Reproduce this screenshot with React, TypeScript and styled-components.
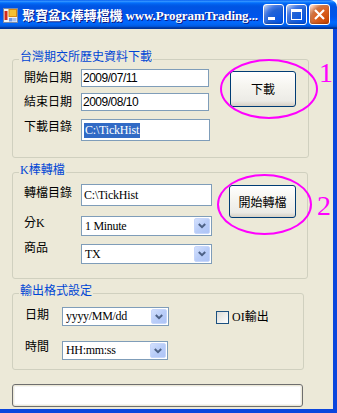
import React from 'react';
import styled, { createGlobalStyle } from 'styled-components';

const Global = createGlobalStyle`
  html, body { margin: 0; padding: 0; background: #ffffff; }
  body { width: 337px; height: 413px; overflow: hidden; }
`;

const SERIF_CJK = `"Liberation Serif", "Noto Sans CJK TC", serif`;
const CJK = `"Noto Sans CJK TC", "Noto Sans CJK SC", sans-serif`;

const Window = styled.div`
  width: 337px;
  height: 413px;
  display: flex;
  flex-direction: column;
  font-family: ${SERIF_CJK};
  font-size: 12px;
  color: #000;
`;

const TitleBar = styled.div`
  flex: none;
  height: 29px;
  box-sizing: border-box;
  display: flex;
  align-items: center;
  padding: 0 7px 0 3px;
  border-top-right-radius: 7px;
  background: linear-gradient(
    #0058ee 0%, #3593ff 4%, #288eff 6%, #127dff 8%, #036ffc 10%, #0262ee 14%,
    #0057e5 20%, #0054e3 24%, #0055eb 56%, #005bf5 66%, #026afe 76%,
    #0062ef 86%, #0052d6 92%, #0040ab 94%, #003092 100%
  );
`;

const AppIcon = styled.svg`
  flex: none;
  width: 15px;
  height: 15px;
  margin-top: 2px;
`;

const TitleText = styled.div`
  flex: 1;
  margin-left: 4px;
  color: #fff;
  font-weight: bold;
  font-size: 13px;
  white-space: nowrap;
  overflow: hidden;
  text-shadow: 1px 1px #0a1883;
  letter-spacing: -0.1px;
`;

const CaptionButton = styled.div<{ $close?: boolean }>`
  flex: none;
  width: 21px;
  height: 21px;
  box-sizing: border-box;
  margin-left: 2px;
  border: 1px solid #fff;
  border-radius: 3px;
  display: flex;
  align-items: center;
  justify-content: center;
  background: ${(p) =>
    p.$close
      ? 'radial-gradient(circle at 90% 90%, #cc4600 0%, #dc6527 55%, #cd7546 70%, #ffccb2 90%, #ffffff 100%)'
      : 'radial-gradient(circle at 90% 90%, #0054e9 0%, #2263d5 55%, #4479e4 70%, #a3bbec 90%, #ffffff 100%)'};
  box-shadow: inset 0 -1px 2px rgba(0, 0, 0, 0.25);
`;

const Frame = styled.div`
  flex: 1;
  display: flex;
  flex-direction: column;
  align-items: flex-start;
  box-sizing: border-box;
  padding: 21px 0 0 12px;
  background: #ece9d8;
  border-right: 4px solid #0b46dd;
  border-bottom: 4px solid #0b46dd;
`;

const Group = styled.fieldset<{ $w: number; $mt?: number }>`
  width: ${(p) => p.$w}px;
  box-sizing: border-box;
  margin: ${(p) => p.$mt ?? 0}px 0 0 0;
  padding: 0;
  min-inline-size: 0;
  border: 1px solid #d0d0bf;
  border-radius: 3px;
`;

const Legend = styled.legend`
  margin-left: 6px;
  padding: 0 1px 4px;
  font-size: 12px;
  line-height: 14px;
  color: #0046d5;
`;

const GroupBody = styled.div<{ $pt: number; $pl: number; $pb: number }>`
  display: flex;
  align-items: flex-start;
  padding: ${(p) => p.$pt}px 0 ${(p) => p.$pb}px ${(p) => p.$pl}px;
`;

const Fields = styled.div`
  display: flex;
  flex-direction: column;
`;

const Row = styled.div<{ $mt?: number }>`
  display: flex;
  align-items: flex-start;
  margin-top: ${(p) => p.$mt ?? 0}px;
`;

const Label = styled.div<{ $w: number; $dy: number }>`
  width: ${(p) => p.$w}px;
  flex: none;
  margin-top: ${(p) => p.$dy}px;
  font-size: 12px;
  line-height: 14px;
  white-space: nowrap;
`;

const TextBox = styled.div<{ $w: number; $h: number; $sans?: boolean }>`
  width: ${(p) => p.$w}px;
  height: ${(p) => p.$h}px;
  box-sizing: border-box;
  border: 1px solid #7f9db9;
  background: #fff;
  display: flex;
  align-items: center;
  padding-left: ${(p) => (p.$sans ? 1 : 2)}px;
  white-space: nowrap;
  font-family: ${(p) => (p.$sans ? '"Liberation Sans", sans-serif' : '"Liberation Serif", serif')};
  font-size: 12px;
  letter-spacing: ${(p) => (p.$sans ? -0.5 : -0.2)}px;
`;

const Selected = styled.span`
  background: #316ac5;
  color: #fff;
  line-height: 15px;
  padding: 0 1px;
`;

const Combo = styled.div<{ $w: number; $h: number }>`
  width: ${(p) => p.$w}px;
  height: ${(p) => p.$h}px;
  box-sizing: border-box;
  border: 1px solid #7f9db9;
  background: #fff;
  display: flex;
  align-items: stretch;
  padding: 1px;
`;

const ComboText = styled.span`
  flex: 1;
  display: flex;
  align-items: center;
  padding-left: 2px;
  font-family: "Liberation Serif", serif;
  font-size: 12px;
  letter-spacing: -0.3px;
  white-space: nowrap;
`;

const ComboButton = styled.span`
  width: 16px;
  box-sizing: border-box;
  border: 1px solid #c6d6fb;
  border-radius: 2px;
  background: linear-gradient(135deg, #d3e0fd 0%, #b9cdf8 50%, #aec4f6 100%);
  display: flex;
  align-items: center;
  justify-content: center;
`;

const ButtonSlot = styled.div<{ $ml: number; $mt: number }>`
  position: relative;
  flex: none;
  margin-left: ${(p) => p.$ml}px;
  margin-top: ${(p) => p.$mt}px;
`;

const PushButton = styled.div<{ $w: number; $h: number }>`
  width: ${(p) => p.$w}px;
  height: ${(p) => p.$h}px;
  box-sizing: border-box;
  border: 1px solid #003c74;
  border-radius: 3px;
  background: linear-gradient(#ffffff 0%, #f6f5f0 40%, #ecebe6 85%, #d6d0c5 100%);
  display: flex;
  align-items: center;
  justify-content: center;
  font-family: ${CJK};
  font-size: 12px;
  line-height: 14px;
`;

const Ellipse = styled.div<{ $l: number; $t: number; $w: number; $h: number }>`
  position: absolute;
  left: ${(p) => p.$l}px;
  top: ${(p) => p.$t}px;
  width: ${(p) => p.$w}px;
  height: ${(p) => p.$h}px;
  box-sizing: border-box;
  border: 2px solid #ff00ff;
  border-radius: 50%;
  pointer-events: none;
`;

const Mark = styled.div<{ $l: number; $t: number }>`
  position: absolute;
  left: ${(p) => p.$l}px;
  top: ${(p) => p.$t}px;
  color: #ff00ff;
  font-family: "Liberation Serif", serif;
  font-size: 28px;
  line-height: 28px;
`;

const CheckWrap = styled.div`
  display: flex;
  align-items: center;
  margin-left: 47px;
  margin-top: 3px;
`;

const CheckBox = styled.div`
  width: 13px;
  height: 13px;
  box-sizing: border-box;
  border: 1px solid #1c5180;
  background: linear-gradient(135deg, #dcdcd7 0%, #ffffff 100%);
`;

const CheckText = styled.span`
  margin-left: 3px;
  font-size: 12px;
  line-height: 14px;
`;

const Progress = styled.div`
  width: 291px;
  height: 23px;
  box-sizing: border-box;
  margin-top: 14px;
  border: 1px solid #6e6e6e;
  border-radius: 3px;
  background: #fff;
  box-shadow: inset 0 0 0 1px #ece9d8, inset 0 0 0 2px #f4f4f4;
`;

const Arrow = () => (
  <svg width="8" height="6" viewBox="0 0 8 6">
    <path d="M0.8 1 L4 4.2 L7.2 1" fill="none" stroke="#4d6185" strokeWidth="2" />
  </svg>
);

const Dropdown: React.FC<{ w: number; h: number; value: string }> = ({ w, h, value }) => (
  <Combo $w={w} $h={h}>
    <ComboText>{value}</ComboText>
    <ComboButton>
      <Arrow />
    </ComboButton>
  </Combo>
);

export default function App() {
  return (
    <>
      <Global />
      <Window>
        <TitleBar>
          <AppIcon viewBox="0 0 15 15">
            <rect x="0.5" y="0.5" width="14" height="14" fill="#f4f4f4" stroke="#7a8aa8" />
            <rect x="1.5" y="3" width="3" height="9" fill="#d42a1c" />
            <rect x="6" y="1.5" width="7.5" height="7" fill="#f6c133" stroke="#d98b12" />
            <rect x="6" y="10" width="3.5" height="3.5" fill="#6d97e4" />
            <rect x="10" y="10" width="3.5" height="3.5" fill="#a9c2ee" />
          </AppIcon>
          <TitleText>聚寶盆K棒轉檔機 www.ProgramTrading...</TitleText>
          <CaptionButton>
            <svg width="19" height="19" viewBox="0 0 19 19">
              <rect x="4" y="12" width="7" height="3" fill="#fff" />
            </svg>
          </CaptionButton>
          <CaptionButton>
            <svg width="19" height="19" viewBox="0 0 19 19">
              <rect x="4.5" y="4.5" width="10" height="10" fill="none" stroke="#fff" />
              <rect x="4" y="4" width="11" height="3" fill="#fff" />
            </svg>
          </CaptionButton>
          <CaptionButton $close>
            <svg width="19" height="19" viewBox="0 0 19 19">
              <path d="M5 5 L14 14 M14 5 L5 14" stroke="#fff" strokeWidth="2.2" />
            </svg>
          </CaptionButton>
        </TitleBar>

        <Frame>
          <Group $w={297}>
            <Legend>台灣期交所歷史資料下載</Legend>
            <GroupBody $pt={1} $pl={11} $pb={16}>
              <Fields>
                <Row>
                  <Label $w={57} $dy={2}>開始日期</Label>
                  <TextBox $w={128} $h={18} $sans>2009/07/11</TextBox>
                </Row>
                <Row $mt={6}>
                  <Label $w={57} $dy={2}>結束日期</Label>
                  <TextBox $w={128} $h={18} $sans>2009/08/10</TextBox>
                </Row>
                <Row $mt={8}>
                  <Label $w={57} $dy={1}>下載目錄</Label>
                  <TextBox $w={129} $h={22}>
                    <Selected>C:\TickHist</Selected>
                  </TextBox>
                </Row>
              </Fields>
              <ButtonSlot $ml={20} $mt={2}>
                <PushButton $w={66} $h={36}>下載</PushButton>
                <Ellipse $l={-10} $t={-12} $w={98} $h={60} />
                <Mark $l={89} $t={-12}>1</Mark>
              </ButtonSlot>
            </GroupBody>
          </Group>

          <Group $w={296} $mt={5}>
            <Legend>K棒轉檔</Legend>
            <GroupBody $pt={3} $pl={11} $pb={14}>
              <Fields>
                <Row>
                  <Label $w={57} $dy={2}>轉檔目錄</Label>
                  <TextBox $w={131} $h={22}>C:\TickHist</TextBox>
                </Row>
                <Row $mt={10}>
                  <Label $w={57} $dy={0}>分K</Label>
                  <Dropdown w={131} h={20} value="1 Minute" />
                </Row>
                <Row $mt={8}>
                  <Label $w={57} $dy={-3}>商品</Label>
                  <Dropdown w={131} h={20} value="TX" />
                </Row>
              </Fields>
              <ButtonSlot $ml={17} $mt={1}>
                <PushButton $w={67} $h={33}>開始轉檔</PushButton>
                <Ellipse $l={-12} $t={-11} $w={95} $h={61} />
                <Mark $l={88} $t={7}>2</Mark>
              </ButtonSlot>
            </GroupBody>
          </Group>

          <Group $w={292} $mt={5}>
            <Legend>輸出格式設定</Legend>
            <GroupBody $pt={5} $pl={12} $pb={9}>
              <Fields>
                <Row>
                  <Label $w={37} $dy={1}>日期</Label>
                  <Dropdown w={107} h={19} value="yyyy/MM/dd" />
                </Row>
                <Row $mt={15}>
                  <Label $w={37} $dy={-1}>時間</Label>
                  <Dropdown w={106} h={19} value="HH:mm:ss" />
                </Row>
              </Fields>
              <CheckWrap>
                <CheckBox />
                <CheckText>OI輸出</CheckText>
              </CheckWrap>
            </GroupBody>
          </Group>

          <Progress />
        </Frame>
      </Window>
    </>
  );
}
